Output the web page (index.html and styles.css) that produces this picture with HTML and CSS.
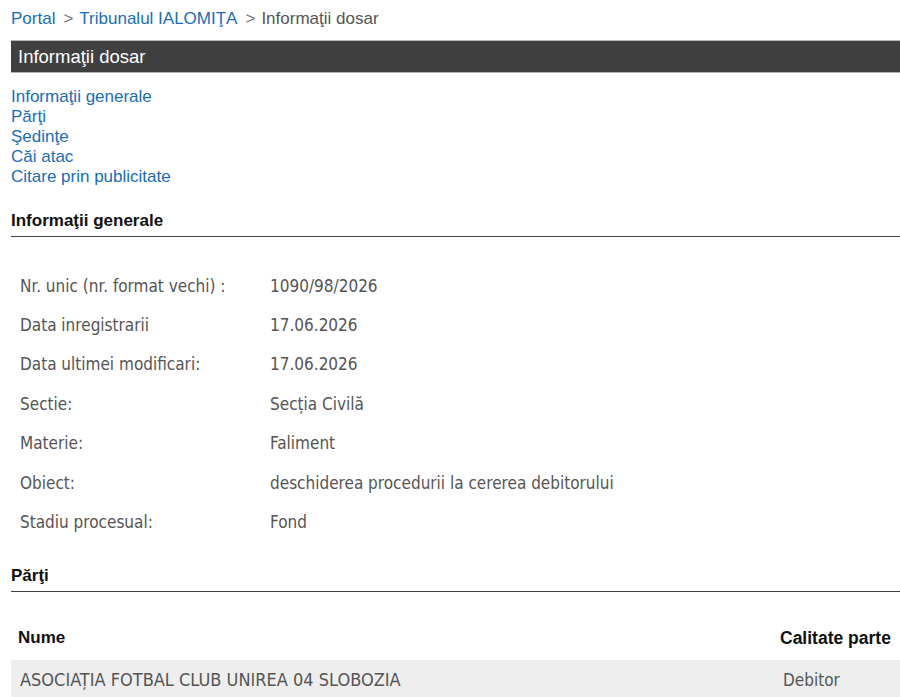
FILE: index.html
```html
<!DOCTYPE html>
<html lang="ro">

<head>
    <meta charset="UTF-8">
    <meta name="viewport" content="width=device-width, initial-scale=1.0">
    <title>Informaţii dosar</title>
    <link rel="stylesheet" href="styles.css">
</head>

<body>
    <div class="page">
        <div class="breadcrumb">
            <a href="#">Portal</a><span class="sep">&gt;</span><a href="#">Tribunalul IALOMIŢA</a><span class="sep">&gt;</span><span class="current">Informaţii dosar</span>
        </div>

        <h1 class="titlebar">Informaţii dosar</h1>

        <ul class="anchors">
            <li><a href="#generale">Informaţii generale</a></li>
            <li><a href="#parti">Părţi</a></li>
            <li><a href="#sedinte">Şedinţe</a></li>
            <li><a href="#cai">Căi atac</a></li>
            <li><a href="#citare">Citare prin publicitate</a></li>
        </ul>

        <h2 class="section-title" id="generale">Informaţii generale</h2>
        <table class="details">
            <tr><td class="lbl">Nr. unic (nr. format vechi) :</td><td>1090/98/2026</td></tr>
            <tr><td class="lbl">Data inregistrarii</td><td>17.06.2026</td></tr>
            <tr><td class="lbl">Data ultimei modificari:</td><td>17.06.2026</td></tr>
            <tr><td class="lbl">Sectie:</td><td>Secția Civilă</td></tr>
            <tr><td class="lbl">Materie:</td><td>Faliment</td></tr>
            <tr><td class="lbl">Obiect:</td><td>deschiderea procedurii la cererea debitorului</td></tr>
            <tr><td class="lbl">Stadiu procesual:</td><td>Fond</td></tr>
        </table>

        <h2 class="section-title" id="parti">Părţi</h2>
        <table class="parties">
            <thead>
                <tr><th>Nume</th><th class="quality">Calitate parte</th></tr>
            </thead>
            <tbody>
                <tr class="odd"><td class="name">ASOCIAȚIA FOTBAL CLUB UNIREA 04 SLOBOZIA</td><td class="quality">Debitor</td></tr>
            </tbody>
        </table>
    </div>
</body>

</html>
```

FILE: styles.css
```css
html,
body,
div,
ul,
li,
h1,
h2,
table,
td,
th {
    margin: 0;
    padding: 0;
}

ul {
    list-style: none;
}

a {
    text-decoration: none;
    color: #1a6dbd;
}

body {
    font-family: "Liberation Sans", Arial, sans-serif;
    font-size: 17px;
    color: #222;
    background: #fff;
}

.page {
    margin-left: 11px;
}

.breadcrumb {
    height: 40px;
    line-height: 38px;
    color: #666;
}
.breadcrumb .sep {
    margin: 0 6px 0 8px;
    color: #777;
}
.breadcrumb .current {
    color: #555;
}

.titlebar {
    font-weight: normal;
    font-size: 18.5px;
    color: #fff;
    background: #404040;
    border-top: 1px solid #b5b5b5;
    border-bottom: 1px solid #b5b5b5;
    height: 31px;
    line-height: 31px;
    padding-left: 7px;
}

.anchors {
    margin-top: 14px;
}
.anchors li {
    line-height: 20px;
    height: 20px;
}

.section-title {
    font-size: 17px;
    font-weight: bold;
    color: #111;
    border-bottom: 1px solid #444;
    height: 27px;
    line-height: 24px;
    margin-top: 22px;
}

.details {
    border-collapse: collapse;
    margin-top: 29px;
    font-family: "DejaVu Sans Condensed", "DejaVu Sans", sans-serif;
    font-size: 17px;
    color: #555;
}
.details td {
    height: 39.4px;
    padding: 0 0 0 9px;
    vertical-align: middle;
}
.details td.lbl {
    width: 241px;
}

#parti {
    margin-top: 22px;
}

.parties {
    width: 100%;
    border-collapse: collapse;
    margin-top: 25px;
}
.parties th {
    text-align: left;
    font-size: 17px;
    font-weight: bold;
    color: #111;
    height: 43px;
    padding: 0 9px 0 7px;
}
.parties th.quality {
    font-size: 17.5px;
    padding: 0 2px 0 0;
}
.parties td {
    font-family: "DejaVu Sans Condensed", "DejaVu Sans", sans-serif;
    font-size: 17px;
    color: #555;
    height: 40px;
    padding: 0 9px;
}
.parties td.name {
    font-size: 18px;
}
.parties .quality {
    width: 118px;
}
.parties td.quality {
    padding: 0 2px 0 3px;
    width: 115px;
}
.parties .odd td {
    background: #eee;
}
```
